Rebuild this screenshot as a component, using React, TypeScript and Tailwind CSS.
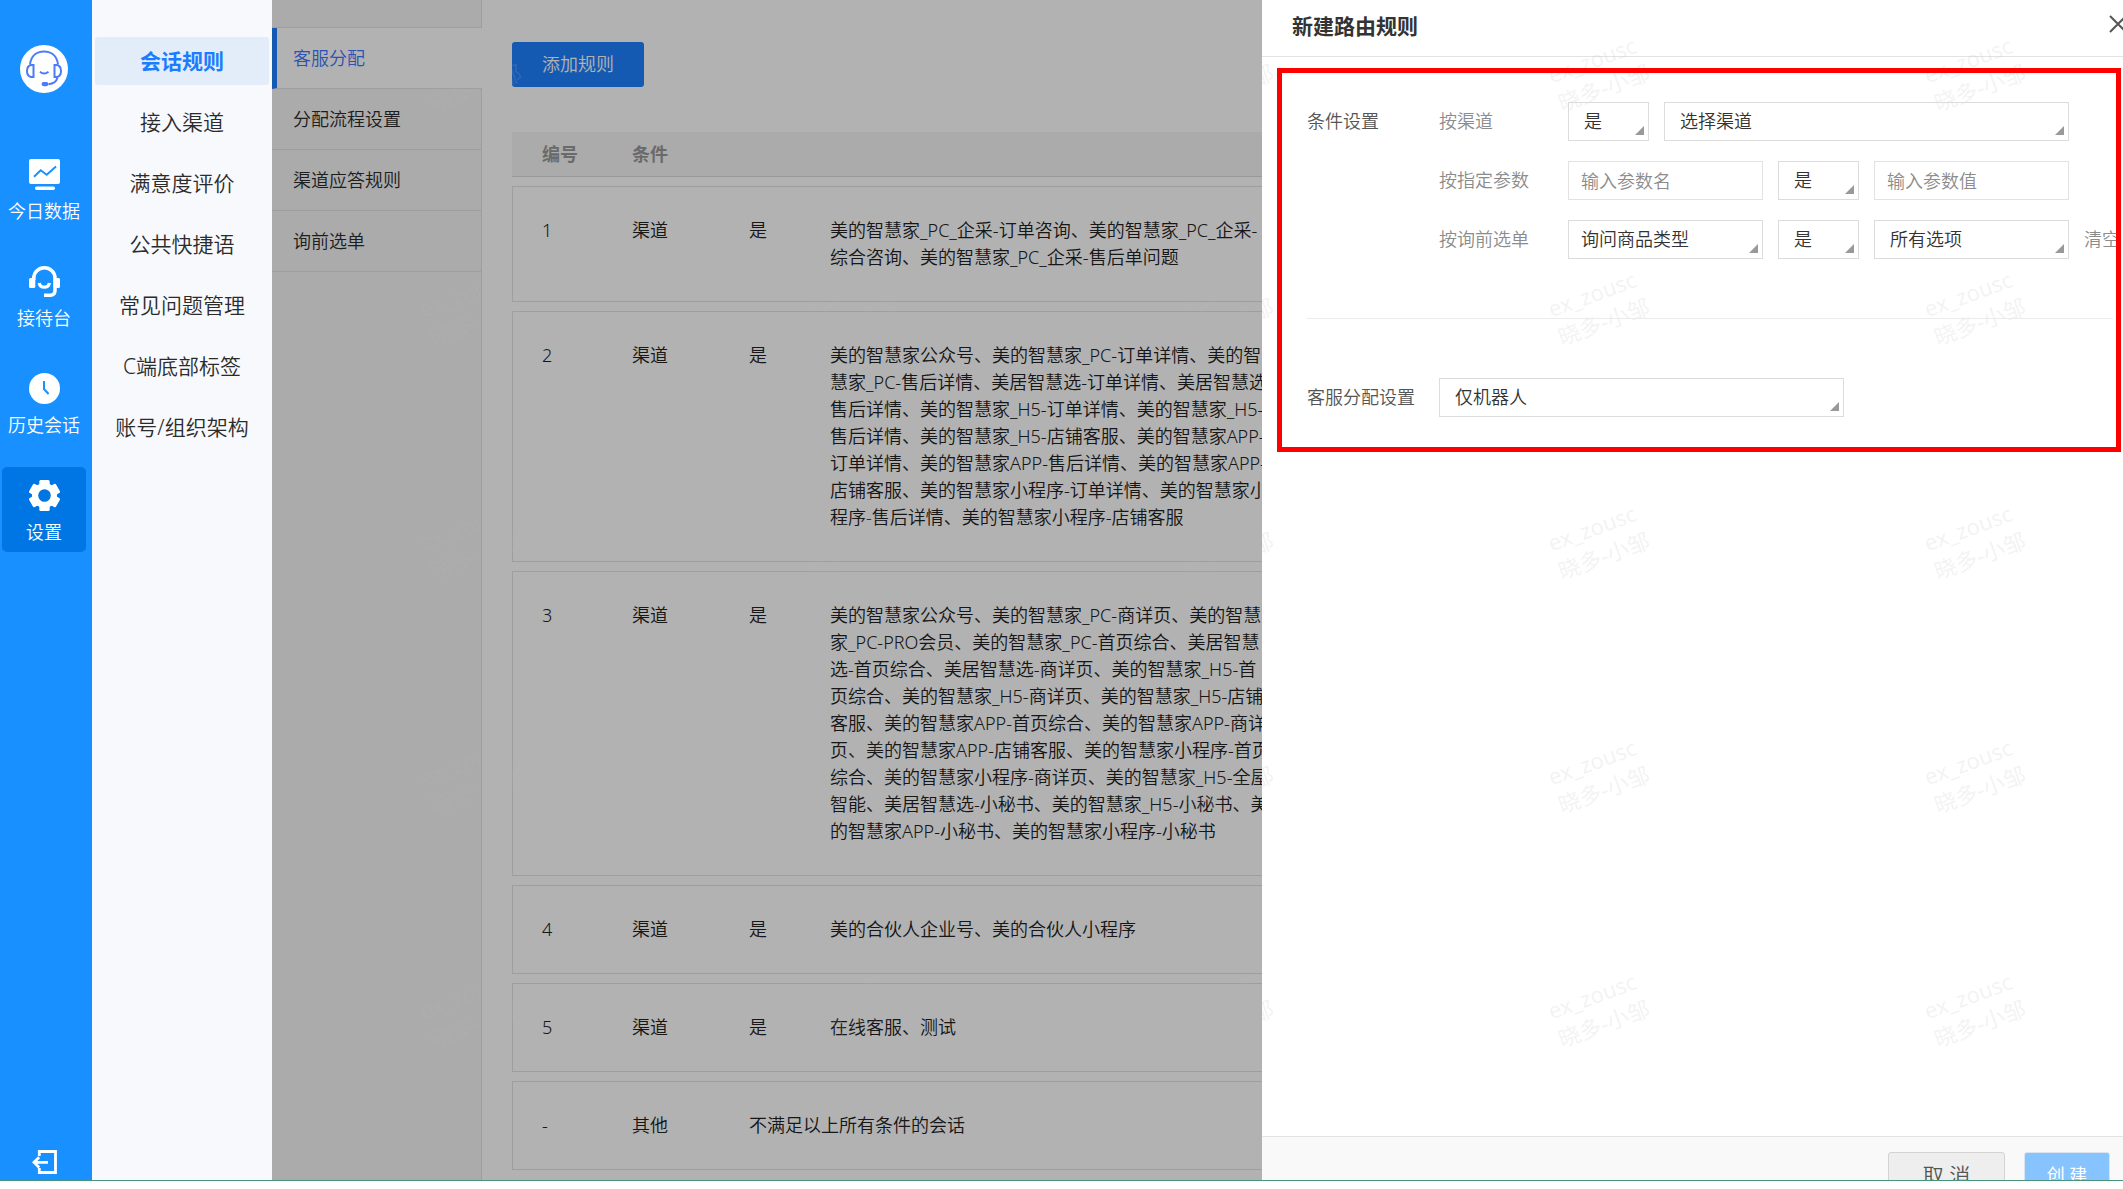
import { ReactNode, useState } from "react";
import clsx from "clsx";

type TRule = {
  no: string;
  type: string;
  relation?: string;
  lines: string[];
};

const rules: TRule[] = [
  {
    no: "1",
    type: "渠道",
    relation: "是",
    lines: ["美的智慧家_PC_企采-订单咨询、美的智慧家_PC_企采-", "综合咨询、美的智慧家_PC_企采-售后单问题"],
  },
  {
    no: "2",
    type: "渠道",
    relation: "是",
    lines: [
      "美的智慧家公众号、美的智慧家_PC-订单详情、美的智",
      "慧家_PC-售后详情、美居智慧选-订单详情、美居智慧选-",
      "售后详情、美的智慧家_H5-订单详情、美的智慧家_H5-",
      "售后详情、美的智慧家_H5-店铺客服、美的智慧家APP-",
      "订单详情、美的智慧家APP-售后详情、美的智慧家APP-",
      "店铺客服、美的智慧家小程序-订单详情、美的智慧家小",
      "程序-售后详情、美的智慧家小程序-店铺客服",
    ],
  },
  {
    no: "3",
    type: "渠道",
    relation: "是",
    lines: [
      "美的智慧家公众号、美的智慧家_PC-商详页、美的智慧",
      "家_PC-PRO会员、美的智慧家_PC-首页综合、美居智慧",
      "选-首页综合、美居智慧选-商详页、美的智慧家_H5-首",
      "页综合、美的智慧家_H5-商详页、美的智慧家_H5-店铺",
      "客服、美的智慧家APP-首页综合、美的智慧家APP-商详",
      "页、美的智慧家APP-店铺客服、美的智慧家小程序-首页",
      "综合、美的智慧家小程序-商详页、美的智慧家_H5-全屋",
      "智能、美居智慧选-小秘书、美的智慧家_H5-小秘书、美",
      "的智慧家APP-小秘书、美的智慧家小程序-小秘书",
    ],
  },
  { no: "4", type: "渠道", relation: "是", lines: ["美的合伙人企业号、美的合伙人小程序"] },
  { no: "5", type: "渠道", relation: "是", lines: ["在线客服、测试"] },
  { no: "-", type: "其他", lines: ["不满足以上所有条件的会话"] },
];

const menus = ["会话规则", "接入渠道", "满意度评价", "公共快捷语", "常见问题管理", "C端底部标签", "账号/组织架构"];
const tabs = ["客服分配", "分配流程设置", "渠道应答规则", "询前选单"];

const ChartIcon = () => (
  <svg viewBox="0 0 31 31" className="size-[31px]">
    <rect width="31" height="25" rx="2" fill="#fff" />
    <path d="M5 17.7 11.7 11.3 17.7 15.7 27 7.5" fill="none" stroke="#1890ff" strokeWidth="2" />
    <rect x="6" y="27.5" width="20" height="3.5" rx="1.7" fill="#fff" />
  </svg>
);

const HeadsetIcon = () => (
  <svg viewBox="0 0 31 31" className="size-[31px]" fill="none" stroke="#fff">
    <path d="M4.8 14v-2a10.6 10.2 0 0 1 21.2 0v12.5q0 4.7-4.7 4.7H15" strokeWidth="3.5" />
    <path d="M10.2 17a5.2 5.2 0 0 0 10.2 0" strokeWidth="3.3" />
    <rect y="12" width="6.3" height="10" rx="1.5" fill="#fff" stroke="none" />
    <rect x="24.7" y="12" width="6.3" height="10" rx="1.5" fill="#fff" stroke="none" />
  </svg>
);

const ClockIcon = () => (
  <svg viewBox="0 0 31 31" className="size-[31px]">
    <circle cx="15.5" cy="15.5" r="15.5" fill="#fff" />
    <path d="M15 8v8l4.6 5" fill="none" stroke="#1890ff" strokeWidth="2" />
  </svg>
);

const GearIcon = () => (
  <svg viewBox="0 0 31 31" className="size-[31px]" fill="#fff">
    <circle cx="15.5" cy="15.5" r="12.5" />
    <rect x="10.3" width="10.4" height="31" rx="1.5" />
    <rect x="10.3" width="10.4" height="31" rx="1.5" transform="rotate(60 15.5 15.5)" />
    <rect x="10.3" width="10.4" height="31" rx="1.5" transform="rotate(120 15.5 15.5)" />
    <circle cx="15.5" cy="15.5" r="6.3" fill="#0076e4" />
  </svg>
);

const Logo = () => (
  <svg viewBox="0 0 48 48" className="size-12" fill="none" stroke="#4a7bfa" strokeWidth="2">
    <circle cx="24" cy="24" r="24" fill="#fff" stroke="none" />
    <path d="M10 19.5C11 11 16.5 6.5 24 6.5S37 11 38 19.5" />
    <path d="M13.5 20v12H11q-4-1-4-6t4-6z" />
    <path d="M34.5 20v12H37q4-1 4-6t-4-6z" />
    <path d="M20 26.7q4.2 3.6 8.5 0M37.5 32.5q-1.5 6-9 6.7" />
    <rect x="21.5" y="37" width="7" height="4.2" rx="2.1" fill="#4a7bfa" stroke="none" />
  </svg>
);

const LogoutIcon = () => (
  <svg viewBox="0 0 25 24" className="w-[25px] h-6" fill="none" stroke="#fff" strokeWidth="2.8">
    <path d="M7.3 6V1.5h16.2v21H7.3V18" />
    <path d="M16 12.3H2M7.2 7.2 2 12.3l5.2 5.2" />
  </svg>
);

const navs = [
  { name: "今日数据", icon: <ChartIcon /> },
  { name: "接待台", icon: <HeadsetIcon /> },
  { name: "历史会话", icon: <ClockIcon /> },
  { name: "设置", icon: <GearIcon /> },
];

type TSelectProps = {
  label: string;
  options: string[];
  className: string;
  inset?: string;
};

function Select({ label, options, className, inset = "pl-[15px]" }: TSelectProps) {
  return (
    <div className={clsx("relative h-[39px] shrink-0", className)}>
      <select
        aria-label={label}
        className={clsx("size-full appearance-none border border-[#dcdcdc] bg-transparent pr-5 text-[#333] outline-none", inset)}>
        {options.map((option) => <option key={option}>{option}</option>)}
      </select>
      <svg viewBox="0 0 9 9" className="pointer-events-none absolute right-[5px] bottom-[6px] size-[9px]">
        <path d="M9 0v9H0z" fill="#999" />
      </svg>
    </div>
  );
}

function Condition({ label, children }: { label: string; children: ReactNode }) {
  return (
    <div className="flex items-center">
      <span className="w-[129px] shrink-0 text-[#8c8c8c]">{label}</span>
      <div className="flex items-center gap-[15px]">{children}</div>
    </div>
  );
}

function Watermark() {
  return (
    <div aria-hidden="true" className="pointer-events-none absolute inset-0 z-10 overflow-hidden">
      <div className="-mt-[44px] ml-[11px] grid w-[1880px] grid-cols-5">
        {Array.from({ length: 25 }, (_, i) => (
          <div key={i} className="flex h-[234px] items-center justify-center">
            <p className="-rotate-[20deg] text-[22px] leading-[30px] font-normal text-[rgba(184,184,184,0.18)]">
              ex_zousc
              <br />
              晓多-小邹
            </p>
          </div>
        ))}
      </div>
    </div>
  );
}

function RuleTable() {
  return (
    <table className="mt-9 w-full table-fixed border-separate border-spacing-x-0 border-spacing-y-[9px] text-left leading-[27px]">
      <colgroup>
        <col className="w-[120px]" />
        <col className="w-[117px]" />
        <col className="w-[81px]" />
        <col />
      </colgroup>
      <thead>
        <tr className="bg-[#f5f5f5] text-[#999]">
          <th scope="col" className="h-[45px] border-b border-[#dcdcdc] pl-[30px] font-bold">编号</th>
          <th scope="col" className="border-b border-[#dcdcdc] font-bold">条件</th>
          <th className="border-b border-[#dcdcdc]"></th>
          <th className="border-b border-[#dcdcdc]"></th>
        </tr>
      </thead>
      <tbody className="text-[#222]">
        {rules.map((rule) => (
          <tr key={rule.no} className="align-top">
            <td className="border-y border-l border-[#e2e2e2] py-[30px] pl-[29px]">{rule.no}</td>
            <td className="border-y border-[#e2e2e2] py-[30px]">{rule.type}</td>
            {rule.relation && <td className="border-y border-[#e2e2e2] py-[30px]">{rule.relation}</td>}
            <td colSpan={rule.relation ? 1 : 2} className="border-y border-r border-[#e2e2e2] py-[30px]">
              {rule.lines.map((line) => <p key={line} className="whitespace-nowrap">{line}</p>)}
            </td>
          </tr>
        ))}
      </tbody>
    </table>
  );
}

function RuleDrawer() {
  return (
    <aside className="absolute inset-y-0 right-0 flex w-[861px] flex-col overflow-hidden bg-white">
      <header className="flex h-[57px] shrink-0 items-center justify-between border-b border-[#e3e3e3] pb-1 pl-[30px]">
        <h2 className="text-[21px] font-bold text-[#333]">新建路由规则</h2>
        <button aria-label="关闭" className="-mr-1 mb-1">
          <svg viewBox="0 0 18 18" className="size-[18px]" stroke="#555" strokeWidth="2">
            <path d="M1 1l16 16M17 1 1 17" />
          </svg>
        </button>
      </header>

      <div className="flex-1">
        <section className="relative z-20 mt-[11px] mr-[2px] ml-[15px] overflow-hidden border-[5px] border-[#ff0000] pt-[29px] pr-[3px] pb-[30px] pl-[25px]">
          <div className="flex">
            <h3 className="flex h-[39px] w-[132px] shrink-0 items-center text-[#555]">条件设置</h3>
            <div className="flex flex-col gap-5">
              <Condition label="按渠道">
                <Select label="渠道关系" options={["是", "否"]} className="w-[81px]" />
                <Select label="渠道" options={["选择渠道"]} className="w-[405px]" />
              </Condition>
              <Condition label="按指定参数">
                <input aria-label="参数名" placeholder="输入参数名" className="h-[39px] w-[195px] border border-[#e2e2e2] px-3 outline-none placeholder:text-[#8c8c8c]" />
                <Select label="参数关系" options={["是", "否"]} className="w-[81px]" />
                <input aria-label="参数值" placeholder="输入参数值" className="h-[39px] w-[195px] border border-[#e2e2e2] px-3 outline-none placeholder:text-[#8c8c8c]" />
              </Condition>
              <Condition label="按询前选单">
                <Select label="询前选单" options={["询问商品类型"]} className="w-[195px]" inset="pl-3" />
                <Select label="选单关系" options={["是", "否"]} className="w-[81px]" />
                <Select label="选项" options={["所有选项"]} className="w-[195px]" />
                <button className="shrink-0 text-[#8c8c8c]">清空</button>
              </Condition>
            </div>
          </div>
          <hr className="mt-[59px] mb-[59px] border-[#ebebeb]" />
          <div className="flex items-center">
            <h3 className="w-[132px] shrink-0 text-[#555]">客服分配设置</h3>
            <Select label="客服分配设置" options={["仅机器人"]} className="w-[405px]" />
          </div>
        </section>
      </div>

      <footer className="flex h-11 shrink-0 items-start justify-end gap-[19px] border-t border-[#e3e3e3] bg-[#f9f9f9] pt-[15px] pr-[13px]">
        <button className="h-[47px] w-[117px] shrink-0 rounded-[3px] border border-[#d3d3d3] bg-[#eee] text-[21px] text-[#555]">取 消</button>
        <button className="h-[47px] w-[86px] shrink-0 rounded-[3px] border border-[#d9e6f2] bg-[#87c3ff] font-normal text-white">创 建</button>
      </footer>
    </aside>
  );
}

export default function App() {
  const [activeMenu, setActiveMenu] = useState("会话规则");
  const [activeTab, setActiveTab] = useState("客服分配");

  return (
    <div className="flex h-screen flex-col overflow-hidden bg-white pb-2 font-['Noto_Sans','Noto_Sans_CJK_SC',sans-serif] text-[18px] leading-[27px] font-[350] text-[#2b2b2b]">
      <div className="flex min-h-0 flex-1 border-b border-[#46957f]">
        {/* main nav */}
        <nav className="flex w-[92px] shrink-0 flex-col items-start bg-[#1890ff] pt-[45px] pb-[6px]">
          <div className="ml-5"><Logo /></div>
          <div className="mt-[53px] flex flex-col gap-[22px] pl-[2px]">
            {navs.map(({ name, icon }) => (
              <button
                key={name}
                className={clsx("flex h-[85px] w-[84px] flex-col items-center rounded-[5px] pt-[13px] text-white", name === "设置" && "bg-[#0076e4]")}>
                {icon}
                <span className="mt-2 whitespace-nowrap">{name}</span>
              </button>
            ))}
          </div>
          <button aria-label="退出" className="mt-auto ml-8"><LogoutIcon /></button>
        </nav>

        {/* settings menu */}
        <nav className="flex w-[180px] shrink-0 flex-col gap-[13px] bg-[#f7f9fc] px-[3px] pt-[37px]">
          {menus.map((menu) => (
            <button
              key={menu}
              onClick={() => setActiveMenu(menu)}
              className={clsx("h-12 rounded-[3px] text-[21px]", menu === activeMenu && "bg-[#e3edf9] font-bold text-[#1b7cff]")}>
              {menu}
            </button>
          ))}
        </nav>

        <div className="relative flex min-w-0 flex-1 overflow-hidden">
          <nav className="flex w-[210px] shrink-0 flex-col bg-[#f5f5f5]">
            <div className="h-7 shrink-0 border-r border-b border-[#e2e2e2]"></div>
            {tabs.map((tab) => (
              <button
                key={tab}
                onClick={() => setActiveTab(tab)}
                className={clsx(
                  "h-[61px] shrink-0 border-b border-b-[#e2e2e2] text-left",
                  tab === activeTab ? "border-l-[5px] border-l-[#1e80ff] bg-white pl-4 text-[#4078ff]" : "border-r border-r-[#e2e2e2] pl-[21px]"
                )}>
                {tab}
              </button>
            ))}
            <div className="flex-1 border-r border-[#e2e2e2]"></div>
          </nav>

          <main className="min-w-0 flex-1 px-[30px] pt-[42px]">
            <button className="block h-[45px] w-[132px] rounded-[3px] bg-[#1e80ff] text-white">添加规则</button>
            <RuleTable />
          </main>

          <div className="absolute inset-0 bg-black/30"></div>
          <RuleDrawer />
          <Watermark />
        </div>
      </div>
    </div>
  );
}
